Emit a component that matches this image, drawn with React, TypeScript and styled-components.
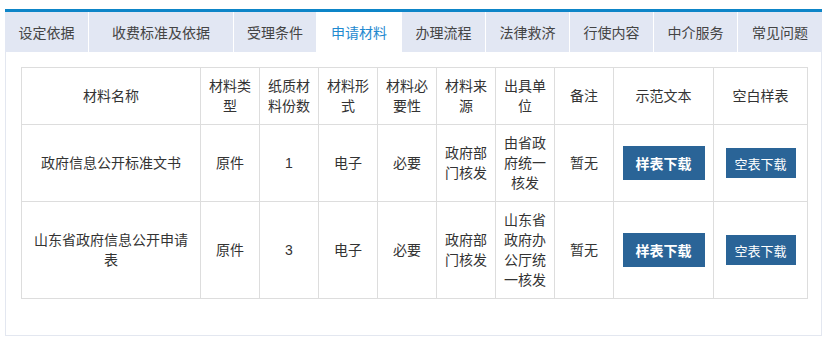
import styled, { createGlobalStyle } from "styled-components";

const GlobalStyle = createGlobalStyle`
  html, body {
    margin: 0;
    padding: 0;
    background: #fff;
  }
  body {
    font-family: "Liberation Sans", "Noto Sans CJK SC", sans-serif;
    font-size: 14px;
    color: #333;
  }
`;

const Wrapper = styled.div`
  padding: 9px 5px 0 5px;
  width: 817px;
`;

const TabBar = styled.ul`
  display: flex;
  margin: 0;
  padding: 0;
  list-style: none;
  border-top: 3px solid #0d85c8;
`;

const Tab = styled.li<{ $w: number; $active?: boolean }>`
  box-sizing: border-box;
  width: ${(p) => p.$w}px;
  height: 40px;
  display: flex;
  align-items: center;
  justify-content: center;
  border-right: 1px solid #fff;
  background: ${(p) => (p.$active ? "#fff" : "#e2e7f3")};
  color: ${(p) => (p.$active ? "#1f8ad0" : "#444")};
  font-size: 14px;
  cursor: pointer;

  &:last-child {
    border-right: none;
  }
`;

const Panel = styled.div`
  box-sizing: border-box;
  border: 1px solid #e3e7f0;
  border-top: none;
  padding: 15px 14px 36px 15px;
`;

const Table = styled.table`
  width: 786px;
  table-layout: fixed;
  border-collapse: collapse;
  text-align: center;

  th,
  td {
    border: 1px solid #ddd;
    padding: 8px 8px;
    line-height: 20px;
    font-weight: normal;
    font-size: 14px;
    color: #333;
    vertical-align: middle;
  }
`;

const Button = styled.button<{ $large?: boolean }>`
  display: inline-block;
  vertical-align: middle;
  border: none;
  background: #2a6497;
  color: #fff;
  font-family: inherit;
  font-size: ${(p) => (p.$large ? 14 : 13)}px;
  font-weight: ${(p) => (p.$large ? 700 : 400)};
  width: ${(p) => (p.$large ? 82 : 70)}px;
  height: ${(p) => (p.$large ? 34 : 30)}px;
  padding: 0;
  cursor: pointer;
`;

const tabs = [
  { label: "设定依据", w: 84 },
  { label: "收费标准及依据", w: 145 },
  { label: "受理条件", w: 83 },
  { label: "申请材料", w: 85, active: true },
  { label: "办理流程", w: 84 },
  { label: "法律救济", w: 84 },
  { label: "行使内容", w: 84 },
  { label: "中介服务", w: 84 },
  { label: "常见问题", w: 84 },
];

const colWidths = [179, 59, 59, 59, 59, 59, 59, 59, 100, 94];

const headers = [
  "材料名称",
  "材料类型",
  "纸质材料份数",
  "材料形式",
  "材料必要性",
  "材料来源",
  "出具单位",
  "备注",
  "示范文本",
  "空白样表",
];

const rows = [
  {
    name: "政府信息公开标准文书",
    type: "原件",
    count: "1",
    form: "电子",
    need: "必要",
    source: "政府部门核发",
    issuer: "由省政府统一核发",
    note: "暂无",
  },
  {
    name: "山东省政府信息公开申请表",
    type: "原件",
    count: "3",
    form: "电子",
    need: "必要",
    source: "政府部门核发",
    issuer: "山东省政府办公厅统一核发",
    note: "暂无",
  },
];

function App() {
  return (
    <Wrapper>
      <GlobalStyle />
      <TabBar>
        {tabs.map((t) => (
          <Tab key={t.label} $w={t.w} $active={t.active}>
            {t.label}
          </Tab>
        ))}
      </TabBar>
      <Panel>
        <Table>
          <colgroup>
            {colWidths.map((w, i) => (
              <col key={i} style={{ width: w }} />
            ))}
          </colgroup>
          <thead>
            <tr>
              {headers.map((h) => (
                <th key={h}>{h}</th>
              ))}
            </tr>
          </thead>
          <tbody>
            {rows.map((r) => (
              <tr key={r.name}>
                <td>{r.name}</td>
                <td>{r.type}</td>
                <td>{r.count}</td>
                <td>{r.form}</td>
                <td>{r.need}</td>
                <td>{r.source}</td>
                <td>{r.issuer}</td>
                <td>{r.note}</td>
                <td>
                  <Button $large>样表下载</Button>
                </td>
                <td>
                  <Button>空表下载</Button>
                </td>
              </tr>
            ))}
          </tbody>
        </Table>
      </Panel>
    </Wrapper>
  );
}

export default App;
